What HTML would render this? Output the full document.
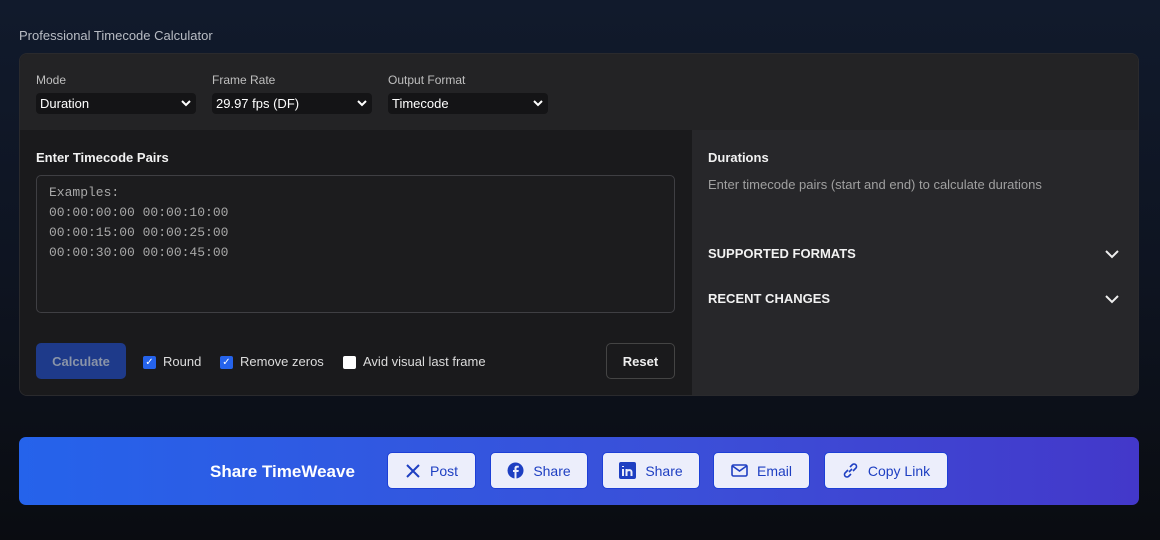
<!DOCTYPE html>
<html><head><style>
*{box-sizing:border-box;margin:0;padding:0}
body{width:1160px;height:540px;overflow:hidden;background:linear-gradient(180deg,#111a2c 0%,#0e1421 50%,#0a0c11 100%);font-family:"Liberation Sans",sans-serif;color:#e5e5e5;position:relative}
.title{position:absolute;left:19px;top:28px;font-size:13px;color:#b8bcc4}
.card{position:absolute;left:19px;top:53px;width:1120px;height:343px;border-radius:8px;overflow:hidden;background:#1a1a1c;border:1px solid #2a2a2d}
.top{height:76px;background:#232325;position:relative}
.lbl{position:absolute;top:19px;font-size:12px;color:#bfbfbf}
.sel{position:absolute;top:39px;width:160px;height:21px;background:#141416;border-radius:4px;font-size:13px;color:#fff;padding:3px 4px}
.sel svg{position:absolute;right:5px;top:6px}
.left{position:absolute;left:0;top:76px;width:672px;height:267px;background:#1a1a1c}
.right{position:absolute;left:672px;top:76px;width:448px;height:267px;background:#27272a}
h3{font-size:13px;font-weight:bold;color:#f2f2f2}
.ta{position:absolute;left:16px;top:45px;width:639px;height:138px;border:1px solid #3f3f43;border-radius:5px;background:#1c1c1e;font-family:"Liberation Mono",monospace;font-size:13px;line-height:20px;color:#a8a8a8;padding:7px 12px}
.btn{position:absolute;top:213px;height:36px;border-radius:5px;font-size:13px;display:flex;align-items:center;justify-content:center}
.cb{position:absolute;top:226px;width:13px;height:13px;border-radius:2px;background:#2563eb;color:#fff;font-size:10px;line-height:13px;text-align:center}
.cl{position:absolute;top:224px;font-size:13px;color:#dcdcdc}
.share{position:absolute;left:19px;top:437px;width:1120px;height:68px;border-radius:7px;background:linear-gradient(90deg,#2563eb,#3b4fd8 60%,#4338ca)}
.sb{position:absolute;top:15px;height:37px;background:#eceefb;border:1px solid #1d3fd6;border-radius:5px;color:#1e3fc2;font-size:14px;display:flex;align-items:center;justify-content:center;gap:9px}
</style></head><body>
<div class="title">Professional Timecode Calculator</div>
<div class="card">
 <div class="top">
  <div class="lbl" style="left:16px">Mode</div>
  <div class="lbl" style="left:192px">Frame Rate</div>
  <div class="lbl" style="left:368px">Output Format</div>
  <div class="sel" style="left:16px">Duration<svg width="10" height="8"><path d="M1 2l4 4 4-4" stroke="#fff" stroke-width="2" fill="none"/></svg></div>
  <div class="sel" style="left:192px">29.97 fps (DF)<svg width="10" height="8"><path d="M1 2l4 4 4-4" stroke="#fff" stroke-width="2" fill="none"/></svg></div>
  <div class="sel" style="left:368px">Timecode<svg width="10" height="8"><path d="M1 2l4 4 4-4" stroke="#fff" stroke-width="2" fill="none"/></svg></div>
 </div>
 <div class="left">
  <h3 style="position:absolute;left:16px;top:20px">Enter Timecode Pairs</h3>
  <div class="ta">Examples:<br>00:00:00:00 00:00:10:00<br>00:00:15:00 00:00:25:00<br>00:00:30:00 00:00:45:00</div>
  <div class="btn" style="left:16px;width:90px;background:#1e3a8a;color:#8a94a8;font-weight:bold">Calculate</div>
  <div class="cb" style="left:123px">✓</div><div class="cl" style="left:143px">Round</div>
  <div class="cb" style="left:200px">✓</div><div class="cl" style="left:220px">Remove zeros</div>
  <div class="cb" style="left:323px;background:#fff"></div><div class="cl" style="left:343px">Avid visual last frame</div>
  <div class="btn" style="left:586px;width:69px;border:1px solid #444;color:#eee;font-weight:bold">Reset</div>
 </div>
 <div class="right">
  <h3 style="position:absolute;left:16px;top:20px">Durations</h3>
  <div style="position:absolute;left:16px;top:47px;font-size:13px;color:#a0a0a0">Enter timecode pairs (start and end) to calculate durations</div>
  <h3 style="position:absolute;left:16px;top:116px">SUPPORTED FORMATS</h3>
  <svg style="position:absolute;left:413px;top:119px" width="14" height="10"><path d="M1 2l6 6 6-6" stroke="#eee" stroke-width="2" fill="none"/></svg>
  <h3 style="position:absolute;left:16px;top:161px">RECENT CHANGES</h3>
  <svg style="position:absolute;left:413px;top:164px" width="14" height="10"><path d="M1 2l6 6 6-6" stroke="#eee" stroke-width="2" fill="none"/></svg>
 </div>
</div>
<div class="share">
 <div style="position:absolute;left:191px;top:25px;font-size:17px;font-weight:bold;color:#fff">Share TimeWeave</div>
 <div class="sb" style="left:368px;width:89px"><svg width="16" height="16"><path d="M2 2l12 12M14 2L2 14" stroke="#1e3fc2" stroke-width="2"/></svg>Post</div>
 <div class="sb" style="left:471px;width:98px"><svg width="17" height="17"><circle cx="8.5" cy="8.5" r="8" fill="#1e3fc2"/><path d="M9.5 17V10h2l.3-2H9.5V6.6c0-.6.3-1 1-1h1.3V3.8H10c-1.8 0-2.5 1-2.5 2.6V8H6v2h1.5v7z" fill="#eceefb"/></svg>Share</div>
 <div class="sb" style="left:583px;width:98px"><svg width="17" height="17"><rect width="17" height="17" rx="2" fill="#1e3fc2"/><path d="M4 7v7M4 4v1M7.5 14V7m0 3c0-2 5-3 5 0v4" stroke="#eceefb" stroke-width="2" fill="none"/></svg>Share</div>
 <div class="sb" style="left:694px;width:97px"><svg width="17" height="13"><rect x="1" y="1" width="15" height="11" rx="1.5" stroke="#1e3fc2" stroke-width="1.6" fill="none"/><path d="M1.5 2l7 5 7-5" stroke="#1e3fc2" stroke-width="1.6" fill="none"/></svg>Email</div>
 <div class="sb" style="left:805px;width:124px"><svg width="17" height="17"><path d="M7 10l3-3M6 8l-3 3a2.5 2.5 0 003.5 3.5L9 12M11 9l3-3a2.5 2.5 0 00-3.5-3.5L8 5" stroke="#1e3fc2" stroke-width="1.6" fill="none"/></svg>Copy Link</div>
</div>
</body></html>
